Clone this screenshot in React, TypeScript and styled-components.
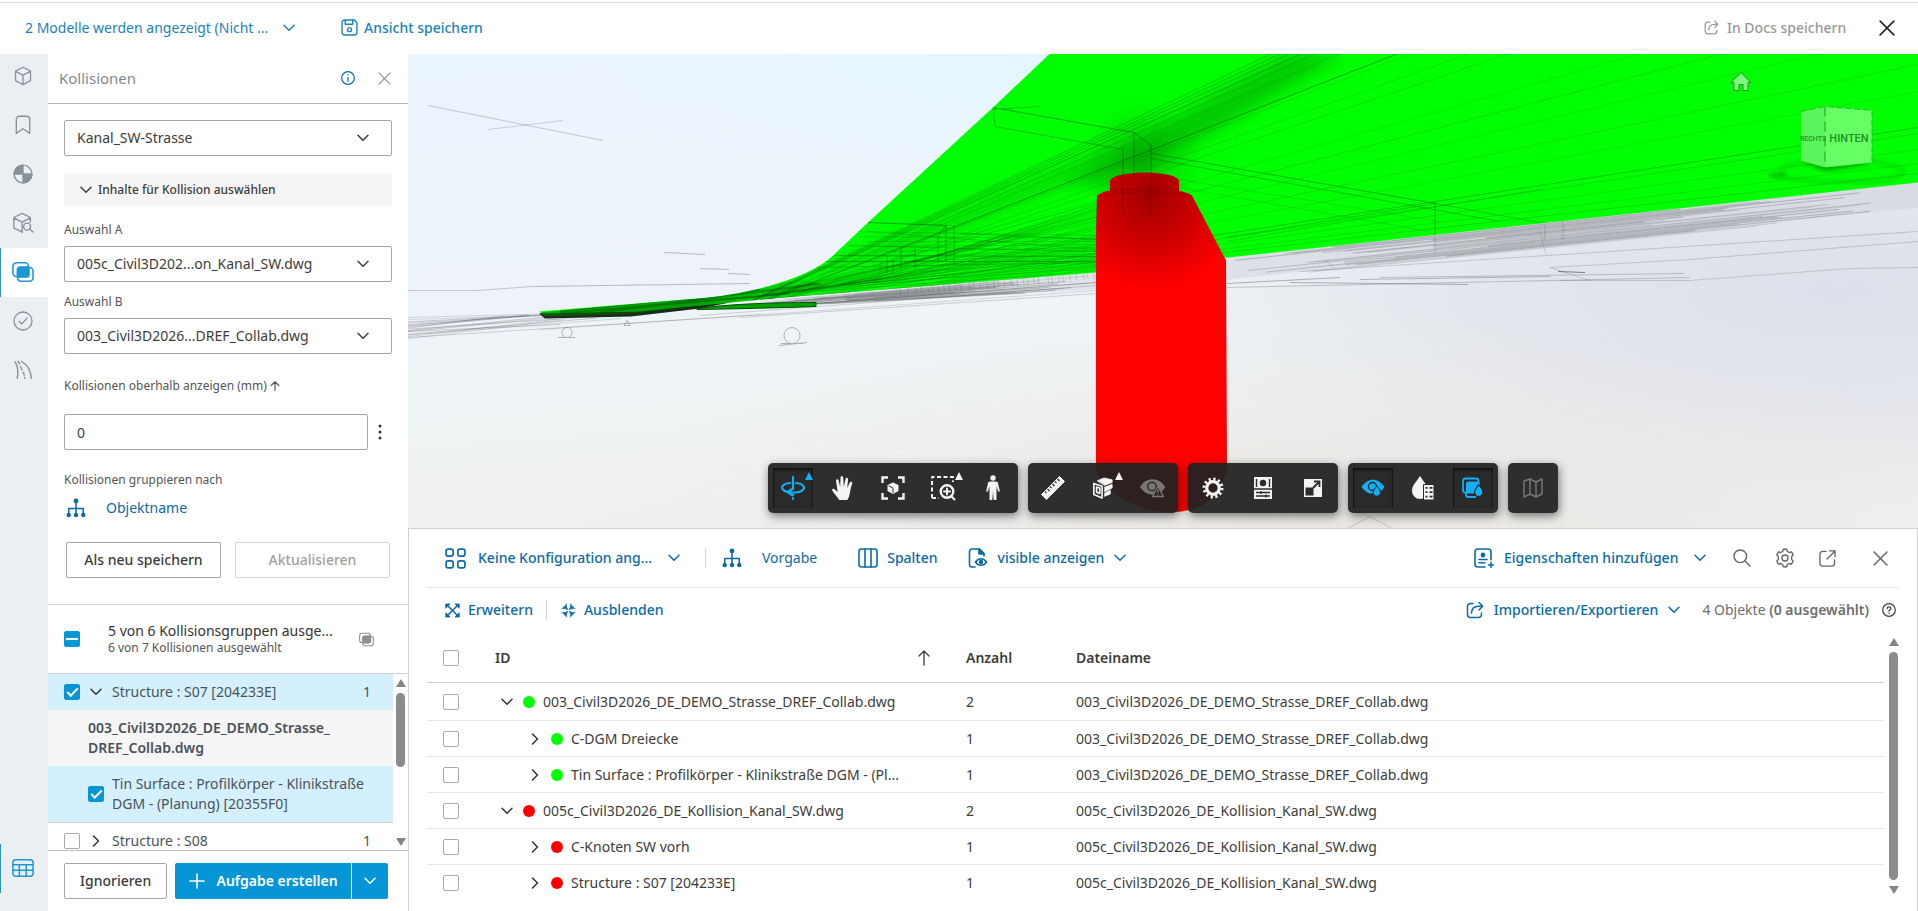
import React from "react";
import styled, { createGlobalStyle, css } from "styled-components";

const c = {
  accent: "#0696d7",
  link: "#0b6aa8",
  topLink: "#1c82bd",
  text: "#3c3c3c",
  muted: "#666666",
  line: "#c9c9c9",
  soft: "#e6e6e6",
  rail: "#eceff2",
  railIcon: "#87919a",
  picked: "#d5f0fd",
};

const GlobalStyle = createGlobalStyle`
  *, *::before, *::after { box-sizing: border-box; }
  html, body { margin: 0; height: 100%; }
  body { overflow: hidden; background: #fff; }
  body, button, input, select, table {
    font-family: "Noto Sans", "Open Sans", sans-serif;
    font-size: 14px;
    line-height: 20px;
    color: ${c.text};
  }
  button { background: none; border: 0; padding: 0; margin: 0; cursor: pointer; white-space: nowrap; }
  svg { display: block; flex: none; }
`;

/* ---------- shared parts ---------- */

type IconProps = { size?: number; w?: number; h?: number; box?: string; stroke?: number; children: React.ReactNode };
const Icon = ({ size = 20, w, h, box = "0 0 24 24", stroke = 1.6, children }: IconProps) => (
  <svg width={w ?? size} height={h ?? size} viewBox={box} fill="none" stroke="currentColor" strokeWidth={stroke} strokeLinecap="round" strokeLinejoin="round" aria-hidden="true">
    {children}
  </svg>
);

const Chevron = () => (
  <Icon w={12} h={8} box="0 0 12 8" stroke={1.5}><path d="M1 1.2l5 5 5-5" /></Icon>
);
const ChevronRight = () => (
  <Icon w={12} h={12} box="0 0 12 12" stroke={1.5}><path d="M3.5 1l5 5-5 5" /></Icon>
);
const Cross = ({ size = 14, stroke = 1.5 }: { size?: number; stroke?: number }) => (
  <Icon size={size} box="0 0 14 14" stroke={stroke}><path d="M1 1l12 12M13 1L1 13" /></Icon>
);
const ShareIcon = ({ size = 18 }: { size?: number }) => (
  <Icon size={size} box="0 0 18 18" stroke={1.5}>
    <path d="M7 2.5H4.5a3 3 0 0 0-3 3v8a3 3 0 0 0 3 3h8a3 3 0 0 0 3-3V12" />
    <path d="M5.5 12c.3-4.2 3-6.8 7-6.8h3.5M13 1.5l3.7 3.7L13 9" />
  </Icon>
);
const TreeIcon = () => (
  <Icon size={20} box="0 0 22 22" stroke={1.7}>
    <path d="M11 4v13M3 18v-6.500h16V18" />
    <g fill="currentColor" stroke="none">
      <circle cx="11" cy="3.200" r="2.700" /><circle cx="3" cy="18.700" r="2.400" /><circle cx="11" cy="18.700" r="2.400" /><circle cx="19" cy="18.700" r="2.400" />
    </g>
  </Icon>
);
const ClashIcon = ({ size = 22 }: { size?: number }) => (
  <Icon size={size} box="0 0 24 24" stroke={1.7}>
    <rect x="1" y="2" width="17" height="15" rx="4" /><rect x="6" y="7" width="17" height="15" rx="4" />
    <rect x="6" y="6.500" width="12.500" height="11" rx="2.500" fill="currentColor" />
  </Icon>
);

const LinkButton = styled.button<{ $gap?: number; $before?: number; $tone?: string; $regular?: boolean }>`
  display: flex;
  align-items: center;
  gap: ${(p) => p.$gap ?? 10}px;
  margin-left: ${(p) => p.$before ?? 0}px;
  color: ${(p) => p.$tone ?? c.link};
  font-weight: ${(p) => (p.$regular ? 400 : 500)};
`;
const Caption = styled.span<{ $w?: number }>`
  text-align: left;
  min-width: ${(p) => p.$w ?? 0}px;
`;
const Divider = styled.span<{ $before: number }>`
  width: 1px;
  height: 20px;
  margin-left: ${(p) => p.$before}px;
  background: #d4d4d4;
`;
const IconButton = styled.button<{ $w?: number; $tone?: string }>`
  display: grid;
  place-items: center;
  width: ${(p) => p.$w ?? 32}px;
  height: 32px;
  color: ${(p) => p.$tone ?? c.muted};
`;

const Check = styled.input.attrs({ type: "checkbox" })<{ $mixed?: boolean }>`
  appearance: none;
  display: grid;
  place-items: center;
  flex: none;
  width: 16px;
  height: 16px;
  margin: 0;
  border: 1px solid #a9a9a9;
  border-radius: 2px;
  background: #fff;
  &:checked { background: ${c.accent}; border-color: ${c.accent}; }
  &:checked::before {
    content: "";
    ${(p) =>
      p.$mixed
        ? css`width: 12px; height: 2px; background: #fff;`
        : css`width: 11px; height: 6px; margin-bottom: 3px; border: solid #fff; border-width: 0 0 2px 2px; rotate: -45deg;`}
  }
`;

const Track = styled.div`
  flex: none;
  display: flex;
  flex-direction: column;
  align-items: center;
  justify-content: space-between;
  gap: 6px;
  width: 9px;
`;
const Thumb = styled.div<{ $grow: number }>`
  width: 9px;
  flex: ${(p) => p.$grow} 0 0;
  border-radius: 5px;
  background: #8b8b8b;
`;
const Rest = styled.div<{ $grow: number }>`flex: ${(p) => p.$grow} 0 0;`;
const Arrow = styled.div<{ $down?: boolean }>`
  border: solid transparent;
  border-width: ${(p) => (p.$down ? "8px 5px 0" : "0 5px 8px")};
  border-${(p) => (p.$down ? "top" : "bottom")}-color: #858585;
`;

/* ---------- page frame ---------- */

const Page = styled.div`
  display: flex;
  flex-direction: column;
  height: 100vh;
`;
const TopBar = styled.header`
  display: flex;
  align-items: center;
  height: 50px;
  margin-top: 2px;
  padding: 0 14px 0 25px;
  border-top: 1px solid #dcdcdc;
`;
const Push = styled.div`flex: 1;`;
const Body = styled.div`
  flex: 1;
  min-height: 0;
  display: grid;
  grid-template-columns: 48px 360px minmax(0, 1fr);
`;
const Rail = styled.nav`
  display: flex;
  flex-direction: column;
  padding-bottom: 18px;
  background: ${c.rail};
  box-shadow: inset 0 2px #fff;
`;
const RailButton = styled.button<{ $active?: boolean; $marked?: boolean }>`
  display: grid;
  place-items: center;
  width: 48px;
  height: 49px;
  padding: 0 4px 2px 0;
  color: ${(p) => (p.$active || p.$marked ? "#1b98d3" : c.railIcon)};
  background: ${(p) => (p.$active ? "#fff" : "transparent")};
  border-left: 1px solid ${(p) => (p.$active || p.$marked ? "#2b94c0" : "transparent")};
`;

/* ---------- left panel ---------- */

const Panel = styled.aside`
  display: flex;
  flex-direction: column;
  min-height: 0;
`;
const PanelHead = styled.div`
  display: flex;
  align-items: center;
  height: 52px;
  padding: 1px 8px 0 11px;
  border-bottom: 1px solid #b5b5b5;
`;
const PanelTitle = styled.h2`
  flex: 1;
  margin: 0;
  font-size: 15px;
  font-weight: 400;
  color: #808a92;
`;
const Form = styled.form`
  display: flex;
  flex-direction: column;
  padding: 16px 16px 26px;
  border-bottom: 1px solid #cfcfcf;
`;
const Disclosure = styled.button`
  display: flex;
  align-items: center;
  gap: 6px;
  height: 32px;
  margin-top: 18px;
  padding-left: 16px;
  background: #f5f5f5;
  font-size: 12px;
  font-weight: 500;
`;
const Label = styled.label<{ $top: number; $bottom: number }>`
  display: flex;
  align-items: center;
  gap: 3px;
  margin: ${(p) => p.$top}px 0 ${(p) => p.$bottom}px;
  font-size: 12px;
  line-height: 16px;
  color: #555;
`;
const SelectBox = styled.div`
  display: grid;
  grid-template-columns: 1fr 35px;
  align-items: center;
  > * { grid-row: 1; }
  > svg { grid-column: 2; pointer-events: none; }
`;
const field = css`
  height: 36px;
  border: 1px solid #a6a6a6;
  border-radius: 2px;
  background: #fff;
  padding: 0 12px;
`;
const Select = styled.select`
  ${field}
  appearance: none;
  grid-column: 1 / 3;
  width: 100%;
`;
const InputRow = styled.div`
  display: flex;
  align-items: center;
`;
const NumberInput = styled.input`
  ${field}
  flex: 1;
  min-width: 0;
`;
const ButtonPair = styled.div`
  display: flex;
  gap: 14px;
  margin: 24px 2px 0;
`;
const OutlineButton = styled.button<{ $wide?: boolean }>`
  height: 36px;
  padding: 0 15px;
  flex: ${(p) => (p.$wide ? 1 : "none")};
  border: 1px solid #a6a6a6;
  border-radius: 2px;
  font-weight: 500;
  &:disabled { color: #a0a0a0; border-color: #d5d5d5; }
`;
const Summary = styled.div`
  display: flex;
  align-items: center;
  gap: 28px;
  height: 69px;
  padding: 0 34px 0 16px;
  border-bottom: 1px solid #cfcfcf;
`;
const SummaryText = styled.label`
  flex: 1;
  min-width: 0;
  display: flex;
  flex-direction: column;
  line-height: 18px;
  white-space: nowrap;
  color: #333;
`;
const Small = styled.small`
  font-size: 12px;
  line-height: 16px;
  color: #555;
`;
const GreyClash = styled.span`color: #8f8f8f;`;
const ListArea = styled.div`
  flex: 1;
  min-height: 0;
  display: flex;
  overflow: hidden;
`;
const List = styled.ul`
  flex: 1;
  margin: 0;
  padding: 0;
  list-style: none;
  overflow: hidden;
`;
const ListRow = styled.li<{ $fill?: string; $indent?: number; $line?: boolean }>`
  display: flex;
  align-items: center;
  gap: 8px;
  padding: 8px 16px 8px ${(p) => p.$indent ?? 16}px;
  background: ${(p) => p.$fill ?? "#fff"};
  color: #4a525a;
  ${(p) => p.$line && css`border-bottom: 1px solid #cfcfcf;`}
`;
const RowText = styled.span<{ $strong?: boolean }>`
  flex: 1;
  font-weight: ${(p) => (p.$strong ? 600 : 400)};
`;
const RowCount = styled.span`width: 14px;`;
const Toggle = styled.button`
  display: grid;
  place-items: center;
  width: 16px;
  height: 16px;
  color: #333;
`;
const ListTrack = styled(Track)`margin: 5px 3px 4px;`;
const PanelFoot = styled.div`
  display: flex;
  gap: 8px;
  padding: 12px 20px 12px 16px;
  border-top: 1px solid #bfbfbf;
`;
const Split = styled.div`
  flex: 1;
  display: flex;
  gap: 1px;
`;
const Primary = styled.button<{ $grow?: boolean }>`
  display: flex;
  align-items: center;
  justify-content: center;
  gap: 12px;
  height: 36px;
  width: ${(p) => (p.$grow ? "auto" : "36px")};
  flex: ${(p) => (p.$grow ? 1 : "none")};
  border-radius: ${(p) => (p.$grow ? "2px 0 0 2px" : "0 2px 2px 0")};
  background: ${c.accent};
  color: #fff;
  font-weight: 600;
`;

/* ---------- viewer ---------- */

const Work = styled.main`
  min-width: 0;
  min-height: 0;
  display: flex;
  flex-direction: column;
`;
const Viewer = styled.section`
  position: relative;
  flex: 1;
  min-height: 0;
  border-top: 2px solid #fff;
  background: #eef4fa;
`;
const SceneSvg = styled.svg`
  width: 100%;
  height: 100%;
`;
const Tools = styled.div`
  position: absolute;
  left: 0;
  right: 0;
  bottom: 15px;
  display: flex;
  justify-content: center;
  gap: 10px;
`;
const ToolGroup = styled.div`
  display: flex;
  height: 50px;
  border-radius: 5px;
  background: rgba(34, 34, 34, 0.94);
  box-shadow: 1px 3px 10px rgba(0, 0, 0, 0.5);
`;
const Tool = styled.button<{ $on?: boolean; $dim?: boolean }>`
  position: relative;
  display: grid;
  place-items: center;
  width: 40px;
  height: 40px;
  margin: 5px;
  color: ${(p) => (p.$on ? "#12b0f5" : p.$dim ? "#7a7777" : "#f4f4f4")};
  ${(p) => p.$on && css`background: rgba(0, 0, 0, 0.08); box-shadow: inset 0 2px 2px #111, inset 1px 0 1px #1a1a1a, inset -1px 0 1px #1a1a1a;`}
`;
const Flyout = styled.span`
  position: absolute;
  top: 4px;
  right: 0;
  border: solid transparent;
  border-width: 0 4px 8px;
  border-bottom-color: currentColor;
`;

/* ---------- table dock ---------- */

const Dock = styled.section`
  display: flex;
  flex-direction: column;
  height: 383px;
  padding: 0 19px 17px 18px;
  border: 1px solid #cfd1d3;
  border-bottom: 0;
  background: #fff;
`;
const DockBar = styled.div`
  display: flex;
  align-items: center;
  height: 59px;
  padding-left: 18px;
  border-bottom: 1px solid ${c.soft};
`;
const IconRow = styled.div`
  display: flex;
  align-items: center;
  margin-left: 14px;
`;
const CloseSlot = styled.div`margin-left: 13px;`;
const DockSubBar = styled.div`
  display: flex;
  align-items: center;
  height: 46px;
  padding: 0 2px 2px 18px;
`;
const Count = styled.span`
  margin: 0 13px 0 22px;
  color: #6e6e6e;
  b { font-weight: 600; }
`;
const DockBody = styled.div`
  flex: 1;
  min-height: 0;
  display: flex;
  gap: 5px;
`;
const DockTrack = styled(Track)`margin-top: 4px;`;
const TableWrap = styled.div`
  flex: 1;
  overflow: hidden;
`;
const Table = styled.table`
  width: 100%;
  table-layout: fixed;
  border-collapse: separate;
  border-spacing: 0;
  th, td { padding: 0; text-align: left; }
  th { height: 49px; border-bottom: 1px solid #cfcfcf; font-weight: 600; }
  td { height: 36px; border-bottom: 1px solid ${c.soft}; white-space: nowrap; }
  tbody tr:first-child td { height: 38px; }
  tbody tr:last-child td { border-bottom: 0; }
  th:first-child, td:first-child { padding-left: 16px; }
`;
const Col = styled.col<{ $w: number }>`width: ${(p) => p.$w}px;`;
const HeadCell = styled.div`
  display: flex;
  align-items: center;
  justify-content: space-between;
  padding-right: 35px;
`;
const IdCell = styled.div<{ $child?: boolean }>`
  display: flex;
  align-items: center;
  gap: 8px;
  padding-left: ${(p) => (p.$child ? 32 : 4)}px;
`;
const Dot = styled.span<{ $color: string }>`
  width: 12px;
  height: 12px;
  border-radius: 50%;
  background: ${(p) => p.$color};
`;

/* ---------- 3D scene ---------- */

type Seg = [number, number, number, number, number];
const noise = (n: number) => {
  const v = Math.sin(n * 127.1) * 43758.5453;
  return v - Math.floor(v);
};
const seg = ([a, b, d, e, o]: Seg, i: number) => <path key={i} d={`M${a} ${b}L${d} ${e}`} opacity={o} />;

const fan: Seg[] = [
  [1272, 54, 0.25], [1281, 54, 0.25], [1290, 54, 0.25], [1302, 54, 0.35], [1316, 54, 0.2], [1340, 54, 0.15], [1398, 54, 0.45], [1412, 54, 0.12], [1470, 54, 0.14],
  [1509, 54, 0.16], [1640, 54, 0.12], [1723, 54, 0.16], [1820, 54, 0.12], [1918, 65, 0.14], [1918, 92, 0.12], [1918, 128, 0.28],
  [1918, 134, 0.16], [1918, 150, 0.14], [1918, 164, 0.14], [1918, 174, 0.18],
].map(([x, y, o], i) => [745 + i * 3, 304 - (i % 4), x, y, o] as Seg);

const lowFan: Seg[] = Array.from({ length: 32 }, (_, i) => [
  720 + noise(i) * 160, 302 - noise(i) * 22, 1100, 200 + i * 2.3, 0.08 + noise(i + 40) * 0.2,
]);
const crossFan: Seg[] = Array.from({ length: 12 }, (_, i) => [
  850 + i * 9, 232 + i * 5, 1100, 236 + i * 3, 0.16,
]);
const leftGround: Seg[] = Array.from({ length: 15 }, (_, i) => [
  408, 318 + i * 1.4 + noise(i) * 2, 500 + noise(i + 3) * 130, 313 + i * 0.5, 0.14 + noise(i + 9) * 0.12,
]);
const verge = (x1: number, y1: number, x2: number, y2: number, d1: number, d2: number, n: number, s: number): Seg[] =>
  Array.from({ length: n }, (_, i) => {
    const t = i / (n - 1);
    const a = noise(i + s) * 0.4;
    const b = 0.6 + noise(i + s + 20) * 0.4;
    const at = (k: number, j: number) => y1 + (y2 - y1) * k + (d1 + (d2 - d1) * k) * j;
    return [x1 + (x2 - x1) * a, at(a, t), x1 + (x2 - x1) * b, at(b, t), 0.1 + noise(i + s + 50) * 0.2];
  });
const posts: Seg[] = Array.from({ length: 34 }, (_, i) => {
  const x = 900 + i * 6 + noise(i) * 4;
  const y = 289 - (x - 900) * 0.077;
  return [x, y, x + 1, y + 5 + noise(i + 5) * 3, 0.18];
});
const piers: Seg[] = [
  [938, 236, 938, 262, 0.4], [946, 226, 946, 262, 0.4], [954, 226, 954, 264, 0.4], [938, 236, 946, 226, 0.4], [915, 248, 915, 270, 0.35],
  [901, 248, 901, 270, 0.35], [893, 260, 893, 274, 0.35], [887, 256, 887, 274, 0.35], [880, 262, 880, 276, 0.35], [1123, 148, 1123, 178, 0.5],
  [1134, 133, 1134, 176, 0.4], [1151, 146, 1151, 176, 0.5], [1435, 203, 1435, 236, 0.4],
];
const beams: Seg[] = [
  [993, 108, 1134, 133, 0.4], [995, 127, 1123, 150, 0.3], [993, 108, 995, 127, 0.35], [1134, 133, 1151, 146, 0.4], [1151, 154, 1435, 204, 0.35],
  [1151, 159, 1500, 222, 0.3], [1179, 180, 1440, 222, 0.14], [1179, 188, 1430, 232, 0.14], [1435, 204, 1545, 224, 0.25], [1226, 238, 1435, 204, 0.25],
  [1226, 242, 1540, 190, 0.2], [993, 110, 1040, 107, 0.25], [992, 98, 1026, 120, 0.2], [868, 223, 948, 226, 0.45], [960, 234, 1096, 240, 0.3],
  [868, 232, 1096, 250, 0.2], [848, 246, 1096, 252, 0.25], [835, 256, 1096, 257, 0.35], [820, 262, 1096, 262, 0.35], [812, 268, 1096, 263, 0.25],
];
const farLines: Seg[] = [
  [428, 106, 603, 141, 0.25], [488, 130, 563, 121, 0.2], [664, 253, 705, 255, 0.3], [700, 269, 729, 270, 0.3], [728, 274, 750, 275, 0.3],
  [408, 291, 478, 291, 0.22], [478, 291, 532, 287, 0.25], [532, 287, 750, 284, 0.3], [408, 338, 780, 314, 0.2], [408, 332, 560, 325, 0.2],
  [540, 330, 760, 315, 0.16], [700, 316, 1096, 286, 0.2], [740, 318, 1096, 294, 0.2], [780, 314, 1096, 291, 0.16], [816, 304, 1096, 283, 0.4],
  [1545, 203, 1545, 240, 0.2], [1563, 222, 1563, 240, 0.2], [1540, 232, 1546, 255, 0.16], [1435, 236, 1435, 254, 0.2], [1325, 260, 1334, 269, 0.16],
  [1227, 288, 1690, 278, 0.25], [1290, 283, 1468, 285, 0.35], [1380, 278, 1684, 274, 0.25], [1550, 268, 1690, 260, 0.2], [1690, 260, 1918, 242, 0.2],
  [1550, 268, 1590, 281, 0.2], [1560, 281, 1690, 281, 0.2], [1690, 281, 1850, 269, 0.18], [1850, 269, 1918, 268, 0.18], [1300, 272, 1918, 232, 0.2],
  [1227, 284, 1340, 278, 0.35], [1360, 280, 1550, 277, 0.3], [1558, 272, 1585, 273, 0.6], [1346, 530, 1370, 517, 0.2], [1370, 517, 1394, 530, 0.2],
];

const Scene = () => (
  <SceneSvg viewBox="408 54 1510 475" preserveAspectRatio="xMidYMid slice" role="img" aria-label="3D-Ansicht">
    <defs>
      <linearGradient id="sky" x1="0" y1="0" x2="0.25" y2="1">
        <stop offset="0" stopColor="#ebf5fe" /><stop offset="0.5" stopColor="#eef3fa" /><stop offset="0.75" stopColor="#eef3f4" /><stop offset="1" stopColor="#f1efef" />
      </linearGradient>
      <radialGradient id="cool" cx="0.95" cy="0.5" r="0.5">
        <stop offset="0" stopColor="#dbe0ea" /><stop offset="0.45" stopColor="#dfe2ea" stopOpacity="0.8" /><stop offset="1" stopColor="#e6e8ee" stopOpacity="0" />
      </radialGradient>
      <radialGradient id="warm" cx="0.6" cy="1.05" r="0.5">
        <stop offset="0" stopColor="#e7e4e0" /><stop offset="1" stopColor="#ecebe6" stopOpacity="0" />
      </radialGradient>
      <radialGradient id="glow" cx="0.42" cy="0" r="0.3">
        <stop offset="0" stopColor="#e3f6ff" /><stop offset="1" stopColor="#e8f6ff" stopOpacity="0" />
      </radialGradient>
      <radialGradient id="cap" gradientUnits="userSpaceOnUse" cx="1150" cy="195" r="95">
        <stop offset="0" stopColor="#a00000" /><stop offset="0.4" stopColor="#c40000" /><stop offset="1" stopColor="#ff0000" />
      </radialGradient>
      <radialGradient id="pit" gradientUnits="userSpaceOnUse" cx="1142" cy="162" r="62">
        <stop offset="0" stopColor="#008000" stopOpacity="0.5" /><stop offset="1" stopColor="#00b400" stopOpacity="0" />
      </radialGradient>
      <linearGradient id="toe" x1="0" x2="1">
        <stop offset="0" stopColor="#008000" stopOpacity="0.6" /><stop offset="0.5" stopColor="#003c00" stopOpacity="0.5" /><stop offset="1" stopColor="#008a00" stopOpacity="0" />
      </linearGradient>
      <filter id="soft" x="-20%" y="-20%" width="140%" height="140%"><feGaussianBlur stdDeviation="8" /></filter>
      <filter id="smear"><feGaussianBlur stdDeviation="2" /></filter>
      <clipPath id="deckClip">
        <path d="M1050 54L993 108 868 223 832 257Q812 276 756 290 722 298 685 300L539 313 546 317 631 315 700 306 783 298 1096 273 1228 258 1918 183V54z" />
      </clipPath>
    </defs>
    <rect x="408" y="54" width="1510" height="475" fill="url(#sky)" />
    <rect x="408" y="54" width="1510" height="475" fill="url(#glow)" />
    <rect x="408" y="54" width="1510" height="475" fill="url(#cool)" />
    <rect x="408" y="54" width="1510" height="475" fill="url(#warm)" />
    <path d="M760 301L1096 273 1228 258 1918 183V208L1228 280 1096 290 760 308z" fill="#cfd1d8" opacity="0.5" />
    <g stroke="#33363a" strokeWidth="1" fill="none">
      {leftGround.map(seg)}
      {verge(740, 304, 1096, 274, 5, 16, 26, 1).map(seg)}
      {verge(1228, 259, 1918, 184, 22, 26, 26, 7).map(seg)}
      {farLines.map(seg)}
      {posts.map(seg)}
      <g opacity="0.35">
        <circle cx="792" cy="336" r="8" /><path d="M779 346l28-3M781 344l22 0" />
        <circle cx="567" cy="333" r="5" /><path d="M558 338h17M624 326l3-5 3 5z" />
      </g>
    </g>
    <path d="M539 314Q620 306 700 300L730 303 700 309 631 317 545 319z" fill="#1b2a1b" />
    <path d="M1050 54L993 108 868 223 832 257Q812 276 756 290 722 298 685 300L539 312 544 314 640 312 700 306 783 298 1096 273 1228 258 1918 183V54z" fill="#00ff00" />
    <path d="M697 309Q740 303 816 303V307Q760 309 697 310z" fill="#00a000" stroke="#005000" strokeWidth="1" />
    <g clipPath="url(#deckClip)">
      <path d="M1060 184L1130 142 1290 54H1345L1190 146 1110 184z" fill="#009600" opacity="0.5" filter="url(#soft)" />
      <path d="M740 300L870 248 1060 165 1120 145 1100 170 900 255z" fill="#00b400" opacity="0.4" filter="url(#soft)" />
      <rect x="1040" y="80" width="220" height="180" fill="url(#pit)" />
      <path d="M539 311L690 298 800 280 850 290 700 310 545 319z" fill="url(#toe)" />
      <g stroke="#003c00" strokeWidth="1" fill="none">
        {fan.map(seg)}
        {lowFan.map(seg)}
        {crossFan.map(seg)}
        {piers.map(seg)}
        {beams.map(seg)}
        <path d="M760 300L1096 274 1228 259 1918 184" opacity="0.6" />
        <path d="M560 312L760 290M560 314L790 294M600 313L820 284" opacity="0.4" strokeWidth="2" />
      </g>
      <g fill="none" stroke="#006400" strokeWidth="4" filter="url(#smear)" opacity="0.18">
        <ellipse cx="1842" cy="172" rx="62" ry="11" />
      </g>
      <ellipse cx="1777" cy="176" rx="9" ry="3" fill="#006400" opacity="0.35" filter="url(#smear)" />
    </g>
    <path d="M1096 470V230L1097 196Q1102 192 1110 191V181Q1113 174 1145 173 1176 174 1179 181V191Q1187 193 1192 196L1226 261 1227 470Q1222 490 1205 505 1188 513 1165 513 1110 505 1096 470z" fill="url(#cap)" />
    <g stroke="#5a0000" fill="none" opacity="0.3">
      <path d="M1110 191Q1145 188 1179 191M1123 178V215M1151 176V218M1098 197Q1145 188 1192 196" />
    </g>
    <path d="M1741 73l-10 10h3v8h5v-6h4v6h5v-8h3z" fill="#7cf87c" stroke="#2c8c2c" strokeWidth="1" />
    <path d="M1803 163l22 9 44-7-8-3z" fill="#007000" opacity="0.55" filter="url(#smear)" />
    <path d="M1801 112l24-5v61l-24-7z" fill="#5cf45c" />
    <path d="M1825 107l47 4v52l-47 5z" fill="#66ff66" />
    <path d="M1825 107v61" stroke="#1c9a1c" strokeDasharray="10 5" />
    <path d="M1801 112l24-5 47 4v52" stroke="#2fb52f" strokeWidth="1" fill="none" strokeDasharray="6 3" />
    <g fill="#1f8f1f" fontFamily="Roboto, sans-serif" fontWeight="500">
      <text x="1813" y="141" fontSize="7" textAnchor="middle">RECHTS</text>
      <text x="1849" y="142" fontSize="11" textAnchor="middle">HINTEN</text>
    </g>
  </SceneSvg>
);

/* ---------- toolbar glyphs ---------- */

const glyphs = {
  orbit: (
    <Icon size={26} box="0 0 26 26" stroke={2.2}>
      <path d="M13 2v12M13 19v1M13 23v1" /><path d="M10 8C5 8.600 2 10.500 2 12.800 2 15 5.500 17 10 17.500M16 8c5 .6 8 2.500 8 4.800 0 2.700-4.500 4.700-10 4.700" />
      <path d="M11.500 13.500L6.500 17l5.500 4z" fill="currentColor" strokeWidth="1" />
    </Icon>
  ),
  hand: (
    <svg width="24" height="26" viewBox="0 0 24 26" fill="currentColor">
      <path d="M8.200 25C6.500 22 3.500 19.500 1.300 15.600c-.8-1.500 1-2.500 2.200-1.400l3.200 2.900L5 5.800c-.2-1.900 2.100-2.200 2.600-.4L9.200 12l.3-9.300c.1-1.900 2.600-1.900 2.700 0l.6 9.100 1.700-7.900c.4-1.700 2.800-1.300 2.600.5l-.9 8.600 2.600-5.400c.8-1.500 2.900-.7 2.400.9-1.100 3.800-1.800 6-2.300 9.200-.4 2.800-1 4.800-2.600 7.300z" />
    </svg>
  ),
  fit: (
    <Icon size={24} stroke={2.4}>
      <path d="M1.500 7V1.500H7M17 1.500h5.500V7M22.500 17v5.500H17M7 22.500H1.500V17" strokeLinecap="butt" strokeLinejoin="miter" />
      <path d="M12 6.500l5.500 2.500v6L12 18l-5.500-3V9z" fill="currentColor" stroke="none" /><path d="M8 10l4 2v4.500" stroke="#2b2b2b" strokeWidth="1" />
    </Icon>
  ),
  zoomWindow: (
    <Icon size={26} box="0 0 26 26" stroke={2}>
      <path d="M2 23V2h21v5M2 23h7" strokeDasharray="4 2.500" strokeLinecap="butt" />
      <circle cx="17" cy="16.500" r="6.300" strokeWidth="2.400" /><path d="M17 13.500v6M14 16.500h6M21.500 21.500l3 3" />
    </Icon>
  ),
  person: (
    <svg width="16" height="26" viewBox="0 0 16 26" fill="currentColor">
      <circle cx="8" cy="3" r="2.700" /><path d="M5 6.500h6c1.300 0 1.800.8 2.100 2l1.600 7.200c.2 1.200-1.300 1.500-1.700.4l-1.500-4.800V24.500c0 .8-2.800.8-2.900 0L8 16l-.6 8.500c-.1.800-2.900.8-2.900 0V11.300L3 16.100c-.4 1.100-1.900.8-1.700-.4l1.600-7.200c.3-1.200.8-2 2.100-2z" />
    </svg>
  ),
  ruler: (
    <svg width="26" height="26" viewBox="0 0 26 26">
      <path d="M19.500 1.500l5 5L6.500 24.500l-5-5z" fill="currentColor" stroke="currentColor" strokeLinejoin="round" />
      <path d="M17.500 4l2 2M15 6.500l1.500 1.500M12.500 9l2 2M10 11.500l1.500 1.500M7.500 14l2 2M5 16.500L6.500 18" stroke="#2b2b2b" strokeWidth="1.300" />
    </svg>
  ),
  section: (
    <Icon size={22} stroke={1.8}>
      <path d="M2 7l9 3v13l-9-4z" /><path d="M5 11l3.500 1v6L5 16.500z" />
      <path d="M6 4l7-3 9 2v3l-8 3zM14 11l8-3v4l-8 4zM14 17.500l6-3v4L14 21z" fill="currentColor" strokeWidth="0.800" />
    </Icon>
  ),
  eyeWarn: (
    <Icon w={26} h={20} box="0 0 26 20" stroke={1.3}>
      <path d="M.7 9C4 4 8 2 12.500 2S21 4 24.500 9l-3 4-4-6-5 9C8 16 4 14 .7 9z" fill="currentColor" />
      <circle cx="12" cy="8.500" r="4.200" stroke="#2b2222" fill="none" /><path d="M18 8.500l5.500 10h-11z" fill="#2b2222" /><path d="M18 12v3M18 16.800v.4" />
    </Icon>
  ),
  gear: (
    <svg width="22" height="22" viewBox="0 0 22 22">
      <circle cx="11" cy="11" r="6.300" fill="none" stroke="currentColor" strokeWidth="3.200" />
      <circle cx="11" cy="11" r="9" fill="none" stroke="currentColor" strokeWidth="3" strokeDasharray="2.300 2.412" />
    </svg>
  ),
  props: (
    <svg width="20" height="24" viewBox="0 0 20 24">
      <path d="M1 1h18v22H1z" fill="currentColor" />
      <g stroke="#2b2b2b" fill="none" strokeWidth="1.400"><path d="M1 13h18M3 16.500h14M3 20h14M8 15v3M13 18.500v3M3.500 3v8M16.500 3v8" /></g>
      <circle cx="10" cy="7" r="3.200" fill="#2b2b2b" />
    </svg>
  ),
  full: (
    <svg width="20" height="20" viewBox="0 0 20 20">
      <path d="M1 1h18v18H1z" fill="currentColor" /><path d="M2.500 9.500h8v8h-8z" fill="#2b2b2b" />
      <path d="M10 10l6-6M11 3.500h5.500V9" fill="none" stroke="#2b2b2b" strokeWidth="1.800" />
    </svg>
  ),
  eyeDrop: (
    <svg width="24" height="18" viewBox="0 0 24 18">
      <path d="M.5 8C4 3 8 .8 12 .8S20 3 23.500 8l-3.200 4-4.500-4.500-4.500 7.300C7.300 14.500 3.500 12.300.5 8z" fill="currentColor" />
      <circle cx="11.500" cy="7.500" r="4" fill="none" stroke="#252525" strokeWidth="1.400" />
      <path d="M15.800 7c2 2.600 3.700 4.400 3.700 6.600a3.700 3.700 0 0 1-7.400 0c0-2.200 1.700-4 3.700-6.600z" fill="currentColor" stroke="#252525" strokeWidth="1" />
    </svg>
  ),
  dropList: (
    <svg width="24" height="26" viewBox="0 0 24 26">
      <path d="M9 1c3 5 8 9.500 8 14.500A8.200 8.200 0 0 1 9 24a8.200 8.200 0 0 1-8-8.500C1 10.500 6 6 9 1z" fill="currentColor" />
      <path d="M12.500 9.500H23V25H12.500z" fill="currentColor" stroke="#2b2b2b" strokeWidth="1" />
      <path d="M14.500 12.800h2M14.500 17.200h2M14.500 21.600h2M18.500 12.800h3M18.500 17.200h3M18.500 21.600h3" stroke="#2b2b2b" strokeWidth="1.800" />
    </svg>
  ),
  clashDrop: (
    <svg width="24" height="22" viewBox="0 0 24 22">
      <path d="M2 14V4a2.500 2.500 0 0 1 2.500-2.500H15A2.500 2.500 0 0 1 17.500 4v1" fill="none" stroke="currentColor" strokeWidth="1.800" />
      <path d="M2 13a2 2 0 0 0 2 2.500h1V18a2 2 0 0 0 2 2h8" fill="none" stroke="currentColor" strokeWidth="1.800" />
      <rect x="5" y="4.500" width="14" height="12" rx="2" fill="currentColor" />
      <path d="M17.800 7.500c2.300 3 4.200 5 4.200 7.800a4.200 4.200 0 0 1-8.400 0c0-2.800 1.900-4.800 4.200-7.800z" fill="currentColor" stroke="#252525" strokeWidth="1.200" />
    </svg>
  ),
  map: (
    <Icon size={22} box="0 0 22 22" stroke={1.4}>
      <path d="M2 4l6-2 6 3 6-3v15l-6 3-6-3-6 3zM8 2v15M14 5v15" />
    </Icon>
  ),
};

type ToolDef = { id: keyof typeof glyphs; name: string; on?: boolean; dim?: boolean; fly?: boolean };
const toolGroups: ToolDef[][] = [
  [{ id: "orbit", name: "Orbit", on: true, fly: true }, { id: "hand", name: "Pan" }, { id: "fit", name: "Einpassen" }, { id: "zoomWindow", name: "Zoom", fly: true }, { id: "person", name: "Begehung" }],
  [{ id: "ruler", name: "Messen" }, { id: "section", name: "Schnitt", fly: true }, { id: "eyeWarn", name: "Sichtbarkeit", dim: true }],
  [{ id: "gear", name: "Einstellungen" }, { id: "props", name: "Eigenschaften" }, { id: "full", name: "Vollbild" }],
  [{ id: "eyeDrop", name: "Einfärben", on: true }, { id: "dropList", name: "Legende" }, { id: "clashDrop", name: "Kollisionsfarben", on: true }],
  [{ id: "map", name: "Karte", dim: true }],
];

const railItems: { name: string; icon: React.ReactNode; active?: boolean }[] = [
  { name: "Modelle", icon: <Icon><path d="M12 1.500l9 4.500v11.500L12 22.500 3 17.500V6zM3 6.500L12 11l9-4.500M12 11v11" /></Icon> },
  { name: "Ansichten", icon: <Icon><path d="M4 22V5a3.500 3.500 0 0 1 3.500-3.500h9A3.500 3.500 0 0 1 20 5v17l-8-5.500z" /></Icon> },
  { name: "Darstellung", icon: <Icon><circle cx="12" cy="12" r="10.700" /><path d="M12 12V1.300A10.700 10.700 0 0 1 22.700 12z" fill="none" stroke="none" /><path d="M12 12V1.300A10.700 10.700 0 0 0 1.300 12zM12 12v10.700A10.700 10.700 0 0 0 22.700 12z" fill="currentColor" /></Icon> },
  { name: "Suche", icon: <Icon size={22} stroke={1.5}><path d="M11.500 22L2 17.500V6l9-4.500L20 6v5M2 6.500L11 11l9-4.500M11 11v11" /><circle cx="16.500" cy="16" r="3.800" /><path d="M19.500 18.800l3.500 3" /></Icon> },
  { name: "Kollisionen", icon: <ClashIcon />, active: true },
  { name: "Aufgaben", icon: <Icon><circle cx="12" cy="12" r="10.800" /><path d="M7.500 12.500l3 3 6.500-7" /></Icon> },
  { name: "Trassen", icon: <Icon stroke={1.7}><path d="M2.500 2c3.500 6 4 13 2.500 20M10 1.500c7 4 11.500 11 12 20.500" /><path d="M6 1.500l2 3M9 8l2 4M12.500 15l1 3M14 21v1" /></Icon> },
];

const rows = [
  { name: "003_Civil3D2026_DE_DEMO_Strasse_DREF_Collab.dwg", n: 2, file: "003_Civil3D2026_DE_DEMO_Strasse_DREF_Collab.dwg", color: "#00ff00" },
  { name: "C-DGM Dreiecke", n: 1, file: "003_Civil3D2026_DE_DEMO_Strasse_DREF_Collab.dwg", color: "#00ff00", child: true },
  { name: "Tin Surface : Profilkörper - Klinikstraße DGM - (Pl...", n: 1, file: "003_Civil3D2026_DE_DEMO_Strasse_DREF_Collab.dwg", color: "#00ff00", child: true },
  { name: "005c_Civil3D2026_DE_Kollision_Kanal_SW.dwg", n: 2, file: "005c_Civil3D2026_DE_Kollision_Kanal_SW.dwg", color: "#ff0000" },
  { name: "C-Knoten SW vorh", n: 1, file: "005c_Civil3D2026_DE_Kollision_Kanal_SW.dwg", color: "#ff0000", child: true },
  { name: "Structure : S07 [204233E]", n: 1, file: "005c_Civil3D2026_DE_Kollision_Kanal_SW.dwg", color: "#ff0000", child: true },
];

export default function App() {
  return (
    <Page>
      <GlobalStyle />
      <TopBar>
        <LinkButton $gap={12} $tone={c.topLink} $regular>
          <Caption $w={246}>2 Modelle werden angezeigt (Nicht ...</Caption>
          <Chevron />
        </LinkButton>
        <LinkButton $gap={6} $before={46} $tone={c.topLink}>
          <Icon size={17} box="0 0 16 16" stroke={1.3}>
            <path d="M3.500 1h9L15 3.500v9A2.500 2.500 0 0 1 12.500 15h-9A2.500 2.500 0 0 1 1 12.500v-9A2.500 2.500 0 0 1 3.500 1z" /><path d="M4 1v4h7V1" /><circle cx="8" cy="10" r="1.900" />
          </Icon>
          <Caption>Ansicht speichern</Caption>
        </LinkButton>
        <Push />
        <LinkButton $gap={8} $tone="#999">
          <ShareIcon size={15} />
          <Caption $w={143}>In Docs speichern</Caption>
        </LinkButton>
        <IconButton $w={34} $tone="#222" aria-label="Schließen"><Cross size={16} stroke={1.4} /></IconButton>
      </TopBar>
      <Body>
        <Rail>
          {railItems.map((r) => (
            <RailButton key={r.name} aria-label={r.name} $active={r.active}>{r.icon}</RailButton>
          ))}
          <Push />
          <RailButton aria-label="Tabelle" $marked>
            <Icon size={22} stroke={1.6}><rect x="1" y="3" width="22" height="18" rx="3" /><path d="M1 8.500h22M1 14.500h22M8 8.500V21M15.500 8.500V21" /></Icon>
          </RailButton>
        </Rail>

        <Panel>
          <PanelHead>
            <PanelTitle>Kollisionen</PanelTitle>
            <IconButton $w={40} $tone={c.link} aria-label="Info">
              <Icon size={14} box="0 0 14 14" stroke={1.2}><circle cx="7" cy="7" r="6.300" /><path d="M7 6.300v4M7 3.700v.3" /></Icon>
            </IconButton>
            <IconButton $tone="#8c8c8c" aria-label="Panel schließen"><Cross size={13} stroke={1.2} /></IconButton>
          </PanelHead>
          <Form>
            <SelectBox>
              <Select aria-label="Kollisionstest"><option>Kanal_SW-Strasse</option></Select>
              <Chevron />
            </SelectBox>
            <Disclosure type="button"><Chevron />Inhalte für Kollision auswählen</Disclosure>
            <Label htmlFor="selA" $top={16} $bottom={8}>Auswahl A</Label>
            <SelectBox>
              <Select id="selA"><option>005c_Civil3D202...on_Kanal_SW.dwg</option></Select>
              <Chevron />
            </SelectBox>
            <Label htmlFor="selB" $top={12} $bottom={8}>Auswahl B</Label>
            <SelectBox>
              <Select id="selB"><option>003_Civil3D2026...DREF_Collab.dwg</option></Select>
              <Chevron />
            </SelectBox>
            <Label htmlFor="limit" $top={24} $bottom={20}>
              Kollisionen oberhalb anzeigen (mm)
              <Icon size={10} box="0 0 10 10" stroke={1.2}><path d="M5 9.500V1M1.200 4.500L5 .8l3.800 3.700" /></Icon>
            </Label>
            <InputRow>
              <NumberInput id="limit" type="text" defaultValue="0" />
              <IconButton $w={24} $tone="#333" type="button" aria-label="Mehr">
                <svg width="4" height="16" viewBox="0 0 4 16" fill="currentColor"><circle cx="2" cy="2" r="1.500" /><circle cx="2" cy="8" r="1.500" /><circle cx="2" cy="14" r="1.500" /></svg>
              </IconButton>
            </InputRow>
            <Label as="span" $top={22} $bottom={10}>Kollisionen gruppieren nach</Label>
            <LinkButton type="button" $gap={20} $before={2} $regular><TreeIcon />Objektname</LinkButton>
            <ButtonPair>
              <OutlineButton type="button" $wide>Als neu speichern</OutlineButton>
              <OutlineButton type="button" $wide disabled>Aktualisieren</OutlineButton>
            </ButtonPair>
          </Form>
          <Summary>
            <Check id="all" $mixed defaultChecked />
            <SummaryText htmlFor="all">
              5 von 6 Kollisionsgruppen ausge...
              <Small>6 von 7 Kollisionen ausgewählt</Small>
            </SummaryText>
            <GreyClash><ClashIcon size={15} /></GreyClash>
          </Summary>
          <ListArea>
            <List>
              <ListRow $fill={c.picked}>
                <Check defaultChecked aria-label="Structure : S07" />
                <Toggle aria-label="Zuklappen"><Chevron /></Toggle>
                <RowText>Structure : S07 [204233E]</RowText>
                <RowCount>1</RowCount>
              </ListRow>
              <ListRow $fill="#f5f5f5" $indent={40}>
                <RowText $strong>003_Civil3D2026_DE_DEMO_Strasse_<br />DREF_Collab.dwg</RowText>
              </ListRow>
              <ListRow $fill={c.picked} $indent={40} $line>
                <Check defaultChecked aria-label="Tin Surface" />
                <RowText>Tin Surface : Profilkörper - Klinikstraße<br />DGM - (Planung) [20355F0]</RowText>
              </ListRow>
              <ListRow>
                <Check aria-label="Structure : S08" />
                <Toggle aria-label="Aufklappen"><ChevronRight /></Toggle>
                <RowText>Structure : S08</RowText>
                <RowCount>1</RowCount>
              </ListRow>
            </List>
            <ListTrack><Arrow /><Thumb $grow={75} /><Rest $grow={60} /><Arrow $down /></ListTrack>
          </ListArea>
          <PanelFoot>
            <OutlineButton>Ignorieren</OutlineButton>
            <Split>
              <Primary $grow>
                <Icon size={16} box="0 0 16 16" stroke={1.5}><path d="M8 1v14M1 8h14" /></Icon>
                Aufgabe erstellen
              </Primary>
              <Primary aria-label="Weitere Optionen"><Chevron /></Primary>
            </Split>
          </PanelFoot>
        </Panel>

        <Work>
          <Viewer>
            <Scene />
            <Tools>
              {toolGroups.map((group, i) => (
                <ToolGroup key={i}>
                  {group.map((t) => (
                    <Tool key={t.id} aria-label={t.name} $on={t.on} $dim={t.dim}>
                      {glyphs[t.id]}
                      {t.fly && <Flyout />}
                    </Tool>
                  ))}
                </ToolGroup>
              ))}
            </Tools>
          </Viewer>
          <Dock>
            <DockBar>
              <LinkButton $gap={12}>
                <Icon size={21} box="0 0 20 20" stroke={1.6}>
                  <rect x="1" y="1" width="6.800" height="6.800" rx="2" /><rect x="12.200" y="1" width="6.800" height="6.800" rx="2" /><rect x="1" y="12.200" width="6.800" height="6.800" rx="2" /><rect x="12.200" y="12.200" width="6.800" height="6.800" rx="2" />
                </Icon>
                <Caption $w={178}>Keine Konfiguration ang...</Caption>
                <Chevron />
              </LinkButton>
              <Divider $before={25} />
              <LinkButton $gap={20} $before={16} $regular><TreeIcon /><Caption>Vorgabe</Caption></LinkButton>
              <LinkButton $gap={9} $before={41}>
                <Icon size={20} box="0 0 20 20" stroke={1.6}><rect x="1" y="1" width="18" height="18" rx="2.500" /><path d="M7 1v18M13 1v18" /></Icon>
                <Caption>Spalten</Caption>
              </LinkButton>
              <LinkButton $gap={10} $before={30}>
                <Icon size={20} box="0 0 20 20" stroke={1.6}>
                  <path d="M7 19H4a2.500 2.500 0 0 1-2.500-2.500v-13A2.500 2.500 0 0 1 4 1h7.500L16 5.500V8" /><path d="M11 1v5h5z" fill="currentColor" />
                  <path d="M7.500 14c1.500-2.300 3.400-3.200 5.500-3.200s4 .9 5.500 3.200c-1.500 2.300-3.400 3.200-5.500 3.200s-4-.9-5.500-3.200z" /><circle cx="13" cy="14" r="1.400" fill="currentColor" />
                </Icon>
                <Caption>visible anzeigen</Caption>
                <Chevron />
              </LinkButton>
              <Push />
              <LinkButton $gap={10}>
                <Icon size={20} box="0 0 20 20" stroke={1.6}>
                  <path d="M11 19H4a3 3 0 0 1-3-3V4a3 3 0 0 1 3-3h10a3 3 0 0 1 3 3v8" /><path d="M5 11.500h8M5 14.800h6" /><circle cx="9" cy="7" r="1.600" fill="currentColor" /><path d="M17 14.500v5M14.500 17h5" />
                </Icon>
                <Caption $w={180}>Eigenschaften hinzufügen</Caption>
                <Chevron />
              </LinkButton>
              <IconRow>
                <IconButton $w={43} aria-label="Suchen"><Icon size={18} box="0 0 18 18" stroke={1.4}><circle cx="7.300" cy="7.300" r="6.300" /><path d="M12 12l5 5" /></Icon></IconButton>
                <IconButton $w={43} aria-label="Einstellungen">
                  <Icon size={20} box="0 0 20 20" stroke={1.4}>
                    <path d="M8.300 1.200h3.400l.7 2.300 1.700 1 2.400-.6 1.700 2.900-1.600 1.800v2.800l1.600 1.800-1.700 2.900-2.400-.6-1.700 1-.7 2.300H8.300l-.7-2.300-1.700-1-2.400.6-1.700-2.900 1.600-1.800V8.600L1.800 6.800l1.700-2.900 2.400.6 1.700-1z" /><circle cx="10" cy="10" r="3" />
                  </Icon>
                </IconButton>
                <IconButton $w={43} aria-label="In neuem Fenster öffnen">
                  <Icon size={17} box="0 0 18 18" stroke={1.4}><path d="M7.500 1.500H4a3 3 0 0 0-3 3V14a3 3 0 0 0 3 3h9.500a3 3 0 0 0 3-3v-3.500M11 1h6v6M17 1l-8.500 8.500" /></Icon>
                </IconButton>
                <CloseSlot><IconButton $w={36} aria-label="Tabelle schließen"><Cross size={15} stroke={1.4} /></IconButton></CloseSlot>
              </IconRow>
            </DockBar>
            <DockSubBar>
              <LinkButton $gap={8}>
                <Icon size={15} box="0 0 15 15" stroke={1.5}>
                  <path d="M2 2l11 11M13 2L2 13" /><path d="M1 1h4L1 5zM14 1h-4l4 4zM1 14h4l-4-4zM14 14h-4l4-4z" fill="currentColor" strokeWidth="0.800" />
                </Icon>
                <Caption>Erweitern</Caption>
              </LinkButton>
              <Divider $before={13} />
              <LinkButton $gap={8} $before={14}>
                <Icon size={15} box="0 0 15 15" stroke={1.5}>
                  <path d="M6.300 6.300L4.300 4.300M8.700 6.300l2-2M6.300 8.700l-2 2M8.700 8.700l2 2" />
                  <path d="M1 5.700h4.700V1zM14 5.700H9.300V1zM1 9.300h4.700V14zM14 9.300H9.300V14z" fill="currentColor" strokeWidth="0.400" />
                </Icon>
                <Caption>Ausblenden</Caption>
              </LinkButton>
              <Push />
              <LinkButton $gap={10}>
                <ShareIcon size={18} />
                <Caption>Importieren/Exportieren</Caption>
                <Chevron />
              </LinkButton>
              <Count>4 Objekte <b>(0 ausgewählt)</b></Count>
              <Icon size={14} box="0 0 14 14" stroke={1.2}><circle cx="7" cy="7" r="6.300" /><path d="M5.200 5.600c0-2.400 3.700-2.300 3.600-.1 0 1.400-1.800 1.300-1.800 2.700M7 10.100v.3" /></Icon>
            </DockSubBar>
            <DockBody>
              <TableWrap>
                <Table>
                  <colgroup><Col $w={68} /><Col $w={471} /><Col $w={110} /><col /></colgroup>
                  <thead>
                    <tr>
                      <th><Check aria-label="Alle auswählen" /></th>
                      <th>
                        <HeadCell>ID<Icon w={14} h={16} box="0 0 14 16" stroke={1.3}><path d="M7 15V1.500M2 6l5-5 5 5" /></Icon></HeadCell>
                      </th>
                      <th>Anzahl</th>
                      <th>Dateiname</th>
                    </tr>
                  </thead>
                  <tbody>
                    {rows.map((r) => (
                      <tr key={r.name}>
                        <td><Check aria-label={r.name} /></td>
                        <td>
                          <IdCell $child={r.child}>
                            <Toggle aria-label="Umschalten">{r.child ? <ChevronRight /> : <Chevron />}</Toggle>
                            <Dot $color={r.color} />
                            <span>{r.name}</span>
                          </IdCell>
                        </td>
                        <td>{r.n}</td>
                        <td>{r.file}</td>
                      </tr>
                    ))}
                  </tbody>
                </Table>
              </TableWrap>
              <DockTrack><Arrow /><Thumb $grow={1} /><Arrow $down /></DockTrack>
            </DockBody>
          </Dock>
        </Work>
      </Body>
    </Page>
  );
}
